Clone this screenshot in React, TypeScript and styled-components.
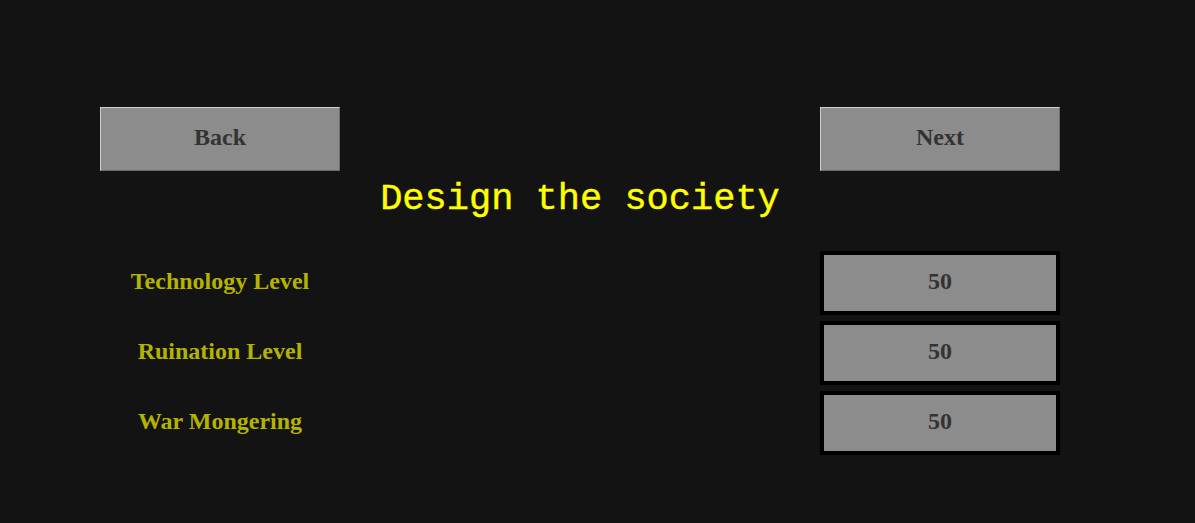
import React from 'react';
import styled, { createGlobalStyle } from 'styled-components';

const GlobalStyle = createGlobalStyle`
  html, body {
    margin: 0;
    padding: 0;
    background: #131313;
  }
`;

const Page = styled.div`
  width: 1195px;
  height: 523px;
  box-sizing: border-box;
  padding: 107px 0 0 100px;
  background: #131313;
  font-family: 'Liberation Serif', 'Times New Roman', serif;
`;

const Grid = styled.div`
  display: grid;
  grid-template-columns: repeat(4, 240px);
  grid-auto-rows: auto;
  row-gap: 6px;
`;

const NavButton = styled.button<{ $col: number }>`
  grid-column: ${(p) => p.$col};
  height: 64px;
  box-sizing: border-box;
  margin: 0;
  padding: 0 0 4px 0;
  background: #8c8c8c;
  border: 1px solid;
  border-color: #d0d0d0 #6a6a6a #6a6a6a #d0d0d0;
  color: #333333;
  font-family: 'Liberation Serif', 'Times New Roman', serif;
  font-weight: bold;
  font-size: 24px;
  cursor: pointer;
`;

const Title = styled.h1`
  grid-column: 1 / 5;
  margin: 0;
  height: 68px;
  box-sizing: border-box;
  padding-top: 1px;
  display: flex;
  align-items: flex-start;
  justify-content: center;
  color: #ffff00;
  font-family: 'Liberation Mono', 'Courier New', monospace;
  font-weight: normal;
  font-size: 37px;
  -webkit-text-stroke: 0.4px #ffff00;
`;

const Label = styled.div`
  grid-column: 1;
  height: 64px;
  padding-bottom: 4px;
  box-sizing: border-box;
  display: flex;
  align-items: center;
  justify-content: center;
  color: #b3b300;
  font-weight: bold;
  font-size: 24px;
`;

const ValueBox = styled.div`
  grid-column: 4;
  height: 64px;
  box-sizing: border-box;
  border: 4px solid #000000;
  padding-bottom: 4px;
  background: #8c8c8c;
  display: flex;
  align-items: center;
  justify-content: center;
  color: #333333;
  font-weight: bold;
  font-size: 24px;
`;

const settings = [
  { label: 'Technology Level', value: 50 },
  { label: 'Ruination Level', value: 50 },
  { label: 'War Mongering', value: 50 },
];

const App: React.FC = () => (
  <>
    <GlobalStyle />
    <Page>
      <Grid>
        <NavButton $col={1}>Back</NavButton>
        <NavButton $col={4}>Next</NavButton>
        <Title>Design the society</Title>
        {settings.map((s) => (
          <React.Fragment key={s.label}>
            <Label>{s.label}</Label>
            <ValueBox>{s.value}</ValueBox>
          </React.Fragment>
        ))}
      </Grid>
    </Page>
  </>
);

export default App;
